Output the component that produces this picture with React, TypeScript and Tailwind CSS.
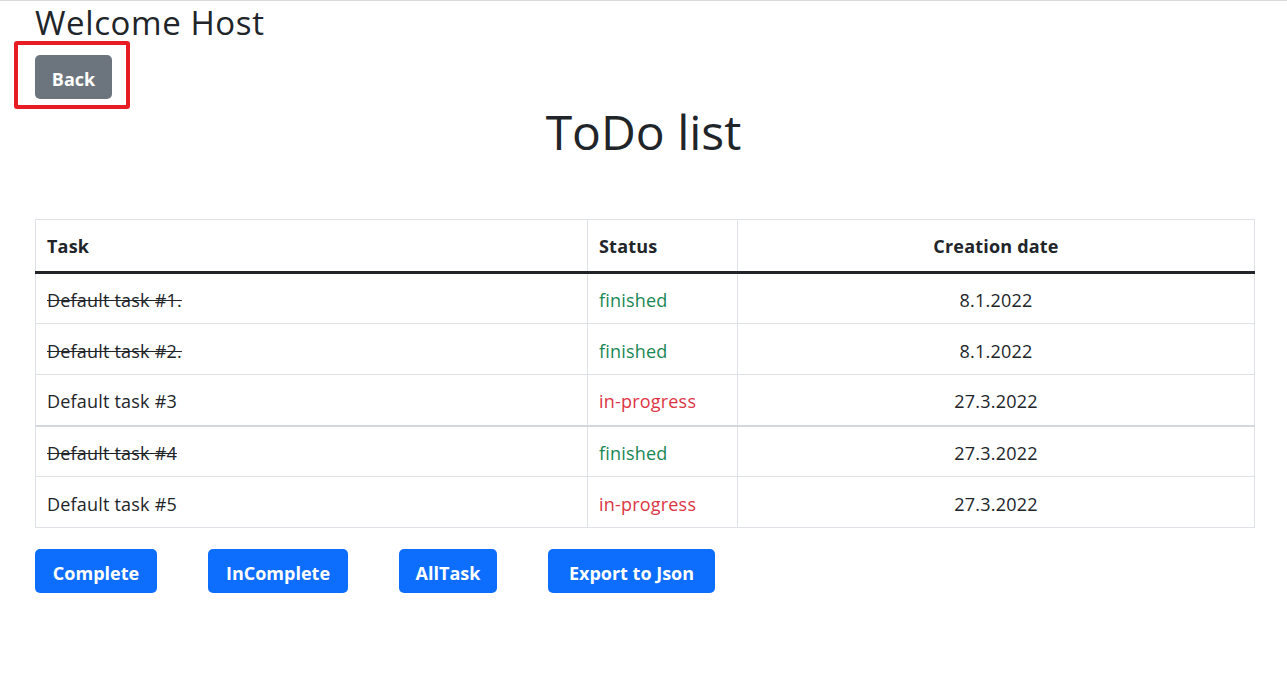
import React from "react";

const rows = [
  { task: "Default task #1.", done: true, date: "8.1.2022" },
  { task: "Default task #2.", done: true, date: "8.1.2022" },
  { task: "Default task #3", done: false, date: "27.3.2022" },
  { task: "Default task #4", done: true, date: "27.3.2022" },
  { task: "Default task #5", done: false, date: "27.3.2022" },
];

const buttons = [
  { label: "Complete", w: "w-[122px]" },
  { label: "InComplete", w: "w-[140px]" },
  { label: "AllTask", w: "w-[98px]" },
  { label: "Export to Json", w: "w-[167px]" },
];

export default function App() {
  return (
    <div
      className="min-h-[686px] w-full bg-white text-[#212529] border-t border-[#d9d9d9]"
      style={{ fontFamily: "'Open Sans', 'Noto Sans', sans-serif" }}
    >
      <div className="px-[35px]">
        <h3 className="text-[33px] leading-[38px] font-normal pt-[3px] tracking-[0.6px]">Welcome Host</h3>
        <div className="-ml-[21px] -mt-[1px] w-[116px] h-[68px] border-[4px] border-[#e81c24] rounded-[3px] pl-[17px] pt-[10px]">
          <button className="w-[77px] h-[44px] pt-[4px] bg-[#6c757d] text-white text-[18px] font-bold rounded-[5px]">
            Back
          </button>
        </div>
        <h1 className="text-center text-[48px] leading-[56px] font-medium mt-[-5px] mb-[0px]">ToDo list</h1>
        <table className="mt-[59px] w-[1220px] border-collapse border border-[#dee2e6] text-[18px] tracking-[0.2px]">
          <thead>
            <tr className="h-[53px] border-b-[3px] border-b-[#212529]">
              <th className="text-left font-bold px-[11px] pt-[2px] w-[552px] border-r border-[#dee2e6]">Task</th>
              <th className="text-left font-bold px-[11px] pt-[2px] w-[150px] border-r border-[#dee2e6]">Status</th>
              <th className="text-center font-bold px-[11px] pt-[2px]">Creation date</th>
            </tr>
          </thead>
          <tbody>
            {rows.map((r, i) => (
              <tr
                key={i}
                className={
                  "h-[51px] border-b border-[#dee2e6] " + (i === 2 ? "border-b-2 border-b-[#d4d8dc]" : "")
                }
              >
                <td className={"px-[11px] pt-[4px] border-r border-[#dee2e6] " + (r.done ? "line-through decoration-[#212529]" : "")}>
                  {r.task}
                </td>
                <td
                  className={
                    "px-[11px] pt-[4px] border-r border-[#dee2e6] " + (r.done ? "text-[#198754]" : "text-[#dc3545]")
                  }
                >
                  {r.done ? "finished" : "in-progress"}
                </td>
                <td className="px-[11px] pt-[4px] text-center">{r.date}</td>
              </tr>
            ))}
          </tbody>
        </table>
        <div className="flex gap-[51px] mt-[21px]">
          {buttons.map((b) => (
            <button
              key={b.label}
              className={"h-[44px] pt-[5px] bg-[#0d6efd] text-white text-[18px] font-bold rounded-[5px] " + b.w}
            >
              {b.label}
            </button>
          ))}
        </div>
      </div>
    </div>
  );
}
